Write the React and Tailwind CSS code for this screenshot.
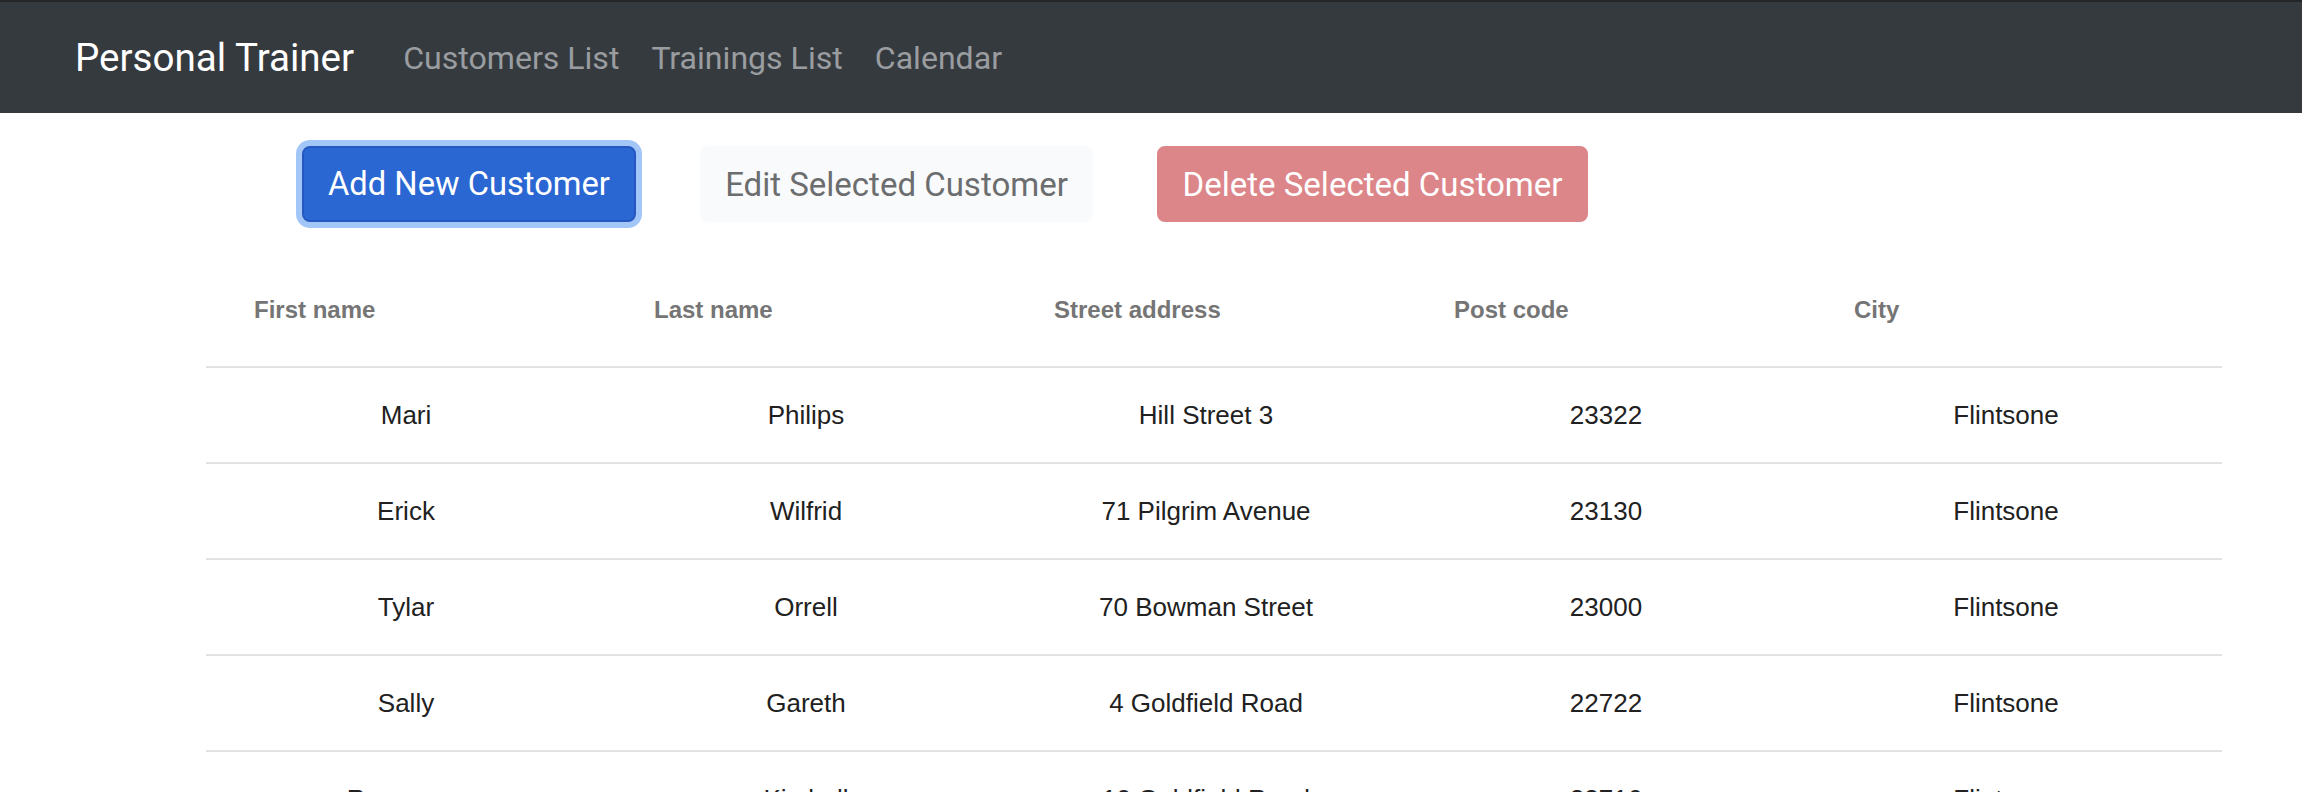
import React from "react";

const rows = [
  ["Mari", "Philips", "Hill Street 3", "23322", "Flintsone"],
  ["Erick", "Wilfrid", "71 Pilgrim Avenue", "23130", "Flintsone"],
  ["Tylar", "Orrell", "70 Bowman Street", "23000", "Flintsone"],
  ["Sally", "Gareth", "4 Goldfield Road", "22722", "Flintsone"],
  ["Roseanne", "Kimball", "10 Goldfield Road", "22716", "Flintsone"],
];

const headers = ["First name", "Last name", "Street address", "Post code", "City"];

export default function App() {
  return (
    <div className="w-full bg-white" style={{ fontFamily: "Roboto, 'Liberation Sans', sans-serif" }}>
      <nav className="h-[113px] bg-[#353a3f] border-t-2 border-[#242628] flex items-center pl-[75px] pt-[2px]">
        <span className="text-[38.6px] leading-none text-white mr-[33px]">Personal Trainer</span>
        <a className="px-[16px] text-[32.1px] leading-none text-[#9a9da0]">Customers List</a>
        <a className="px-[16px] text-[32.1px] leading-none text-[#9a9da0]">Trainings List</a>
        <a className="px-[16px] text-[32.1px] leading-none text-[#9a9da0]">Calendar</a>
      </nav>

      <div className="flex gap-[64px] pl-[302px] pt-[33px]">
        <button className="w-[334px] h-[76px] rounded-[8px] border-2 border-[#2458c0] bg-[#2b67d3] text-white text-[32.7px] leading-none flex items-center justify-center ring-[6px] ring-[#a3c6f8]">
          Add New Customer
        </button>
        <button className="w-[393px] h-[76px] rounded-[8px] border-2 border-[#f9fafb] bg-[#f9fafb] text-[#6b6d6f] text-[33px] leading-none flex items-center justify-center">
          Edit Selected Customer
        </button>
        <button className="w-[431px] h-[76px] rounded-[8px] border-2 border-[#dc868a] bg-[#dc868a] text-white text-[33px] leading-none flex items-center justify-center">
          Delete Selected Customer
        </button>
      </div>

      <div className="ml-[206px] mt-[32px] w-[2016px]" style={{ fontFamily: "'Liberation Sans', Arial, sans-serif" }}>
        <div className="h-[114px] border-b-2 border-[#e2e2e2] grid grid-cols-[400px_400px_400px_400px_400px] items-center">
          {headers.map((h) => (
            <div key={h} className="pl-[48px] text-[24px] font-bold text-[#757575] leading-none">
              {h}
            </div>
          ))}
        </div>
        {rows.map((r, i) => (
          <div key={i} className="h-[96px] border-b-2 border-[#e2e2e2] grid grid-cols-[400px_400px_400px_400px_400px] items-center">
            {r.map((c, j) => (
              <div key={j} className="px-[48px] text-center text-[26px] text-[#212121] leading-none">
                {c}
              </div>
            ))}
          </div>
        ))}
      </div>
    </div>
  );
}
